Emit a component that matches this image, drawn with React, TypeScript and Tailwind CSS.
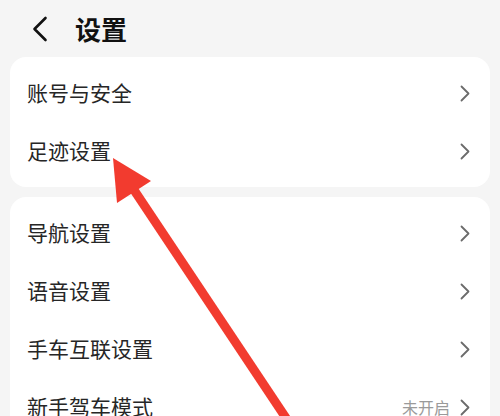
import React from "react";

const Chevron = () => (
  <svg width="10" height="17" viewBox="0 0 10 17" fill="none">
    <path d="M1.5 1.5 8.5 8.5 1.5 15.5" stroke="#6b6b6b" strokeWidth="1.8" strokeLinecap="round" strokeLinejoin="round" />
  </svg>
);

const Row = ({ label, value }: { label: string; value?: string }) => (
  <div className="flex items-center h-[58px] pl-[17px] pr-[20px]">
    <span className="flex-1 text-[21px] text-[#262626]">{label}</span>
    {value && <span className="text-[16px] text-[#9a9a9a] mr-[10px]">{value}</span>}
    <Chevron />
  </div>
);

export default function App() {
  return (
    <div
      className="relative w-[500px] h-[416px] overflow-hidden bg-[#f5f5f5]"
      style={{ fontFamily: '"Noto Sans CJK SC", "Noto Sans", sans-serif' }}
    >
      {/* Header */}
      <div className="flex items-center h-[57px] pl-[32px]">
        <svg width="16" height="26" viewBox="0 0 16 26" fill="none">
          <path d="M13.5 2 2.5 13 13.5 24" stroke="#111" strokeWidth="2.6" strokeLinecap="round" strokeLinejoin="round" />
        </svg>
        <span className="ml-[27px] text-[26px] font-bold text-[#111]">设置</span>
      </div>

      <div className="flex flex-col gap-[10px] px-[10px]">
        <div className="bg-white rounded-[16px] py-[7px]">
          <Row label="账号与安全" />
          <Row label="足迹设置" />
        </div>
        <div className="bg-white rounded-[16px] py-[7px]">
          <Row label="导航设置" />
          <Row label="语音设置" />
          <Row label="手车互联设置" />
          <Row label="新手驾车模式" value="未开启" />
        </div>
      </div>

      {/* Red annotation arrow */}
      <svg className="absolute inset-0 pointer-events-none" width="500" height="416" viewBox="0 0 500 416">
        <line x1="134" y1="190" x2="290" y2="424" stroke="#f23b2f" strokeWidth="9" />
        <polygon points="113,158 151,181 117,203" fill="#f23b2f" />
      </svg>
    </div>
  );
}
